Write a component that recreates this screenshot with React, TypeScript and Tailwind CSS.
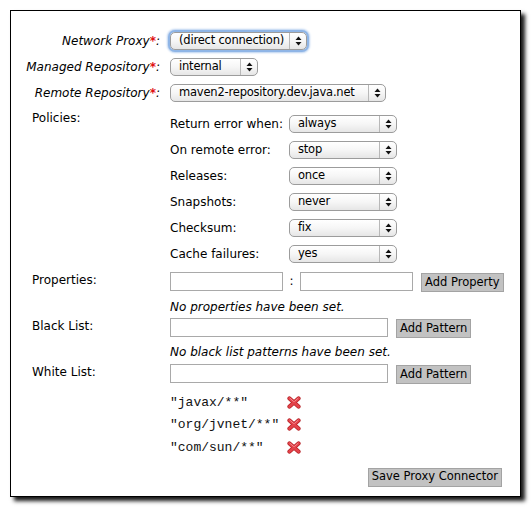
import React from "react";

const font = "font-['Verdana','DejaVu_Sans',sans-serif]";

function Arrows() {
  return (
    <svg width="7" height="10" viewBox="0 0 7 10" className="block">
      <path d="M3.5 0.5 L6.5 4 L0.5 4 Z" fill="#111" />
      <path d="M3.5 9.5 L6.5 6 L0.5 6 Z" fill="#111" />
    </svg>
  );
}

function Select({ value, width, focus = false }: { value: string; width: string; focus?: boolean }) {
  return (
    <div
      className={`${width} h-[18px] flex items-stretch rounded-[5px] border border-[#9c9c9c] bg-gradient-to-b from-white via-[#f6f6f6] to-[#e6e6e6] ${
        focus ? "shadow-[0_0_0_2px_#8fb5e6,0_0_2px_3px_#b9d1f0]" : ""
      }`}
    >
      <div className="flex-1 flex items-center pl-[8px] text-[11.5px] tracking-[-0.2px] leading-none text-black whitespace-nowrap overflow-hidden">
        {value}
      </div>
      <div className="w-[17px] border-l border-[#b8b8b8] flex items-center justify-center">
        <Arrows />
      </div>
    </div>
  );
}

function Button({ children }: { children: React.ReactNode }) {
  return (
    <button className="h-[19px] px-[3px] bg-[#c2c2c2] border border-[#a3a3a3] text-[11.5px] leading-none text-black whitespace-nowrap">
      {children}
    </button>
  );
}

function Input({ width }: { width: string }) {
  return <div className={`${width} h-[19px] border border-[#a9a9a9] bg-white`} />;
}

function RedX() {
  return (
    <svg width="14" height="13" viewBox="0 0 14 13" className="block">
      <g strokeLinecap="round">
        <path d="M2.5 2.5 L11.5 10.5 M11.5 2.5 L2.5 10.5" stroke="#b51f24" strokeWidth="4.2" />
        <path d="M2.5 2.5 L11.5 10.5 M11.5 2.5 L2.5 10.5" stroke="#e4434a" strokeWidth="2.8" />
        <path d="M3 2.3 L6.5 5.4 M11 2.3 L7.6 5.4" stroke="#f58a8e" strokeWidth="1" />
      </g>
    </svg>
  );
}

function ReqLabel({ text }: { text: string }) {
  return (
    <div className="w-[138px] pr-[4px] text-right italic text-[12px] text-black whitespace-nowrap">
      {text}
      <span className="text-[#e01010] not-italic font-bold">*</span>:
    </div>
  );
}

const policies: [string, string][] = [
  ["Return error when:", "always"],
  ["On remote error:", "stop"],
  ["Releases:", "once"],
  ["Snapshots:", "never"],
  ["Checksum:", "fix"],
  ["Cache failures:", "yes"],
];

const patterns = ['"javax/**"', '"org/jvnet/**"', '"com/sun/**"'];

export default function App() {
  return (
    <div className={`w-[531px] h-[507px] bg-white pt-[10px] pl-[10px] ${font}`}>
      <div className="w-[511px] h-[487px] border border-black bg-white shadow-[4px_4px_4px_rgba(0,0,0,0.9)] pl-[21px] pt-[17px]">
        <div className="flex items-center h-[26px] -ml-[6px]">
          <ReqLabel text="Network Proxy" />
          <div className="ml-[6px]">
            <Select value="(direct connection)" width="w-[137px]" focus />
          </div>
        </div>
        <div className="flex items-center h-[26px] -ml-[6px]">
          <ReqLabel text="Managed Repository" />
          <div className="ml-[6px]">
            <Select value="internal" width="w-[88px]" />
          </div>
        </div>
        <div className="flex items-center h-[26px] -ml-[6px]">
          <ReqLabel text="Remote Repository" />
          <div className="ml-[6px]">
            <Select value="maven2-repository.dev.java.net" width="w-[216px]" />
          </div>
        </div>

        <div className="flex">
          <div className="w-[138px] pt-[3px] text-[12px] text-black">Policies:</div>
          <div className="flex flex-col pt-[5px]">
            {policies.map(([label, value]) => (
              <div key={label} className="flex items-center h-[26px]">
                <div className="w-[119px] text-[12px] text-black whitespace-nowrap">{label}</div>
                <Select value={value} width="w-[108px]" />
              </div>
            ))}
          </div>
        </div>

        <div className="flex mt-[4px]">
          <div className="w-[138px] text-[12px] text-black">Properties:</div>
          <div className="flex flex-col">
            <div className="flex items-center h-[20px]">
              <Input width="w-[113px]" />
              <span className="w-[17px] text-center text-[12px] text-black">:</span>
              <Input width="w-[113px]" />
              <div className="ml-[8px]">
                <Button>Add Property</Button>
              </div>
            </div>
            <div className="mt-[9px] text-[12px] italic text-black leading-[14px]">
              No properties have been set.
            </div>
          </div>
        </div>

        <div className="flex mt-[3px]">
          <div className="w-[138px] text-[12px] text-black">Black List:</div>
          <div className="flex flex-col">
            <div className="flex items-center h-[20px]">
              <Input width="w-[218px]" />
              <div className="ml-[8px]">
                <Button>Add Pattern</Button>
              </div>
            </div>
            <div className="mt-[8px] text-[12px] italic text-black leading-[14px]">
              No black list patterns have been set.
            </div>
          </div>
        </div>

        <div className="flex mt-[4px]">
          <div className="w-[138px] text-[12px] text-black">White List:</div>
          <div className="flex flex-col">
            <div className="flex items-center h-[20px]">
              <Input width="w-[218px]" />
              <div className="ml-[8px]">
                <Button>Add Pattern</Button>
              </div>
            </div>
            <div className="mt-[8px] flex flex-col">
              {patterns.map((p) => (
                <div key={p} className="flex items-center h-[22.5px]">
                  <span className="w-[117px] font-['Liberation_Mono','Courier_New',monospace] text-[13px] text-[#111]">
                    {p}
                  </span>
                  <RedX />
                </div>
              ))}
            </div>
          </div>
        </div>

        <div className="flex justify-end pr-[18px] mt-[9px]">
          <Button>Save Proxy Connector</Button>
        </div>
      </div>
    </div>
  );
}
